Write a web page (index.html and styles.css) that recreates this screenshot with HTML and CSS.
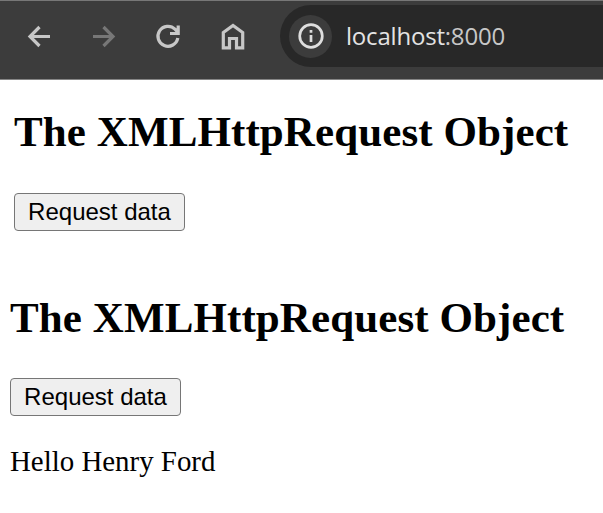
FILE: index.html
```html
<!DOCTYPE html>
<html lang="en">
<head>
<meta charset="utf-8">
<title>The XMLHttpRequest Object</title>
<link rel="stylesheet" href="styles.css">
</head>
<body>
<header class="toolbar">
  <nav class="nav">
    <svg class="icon" viewBox="0 0 28 28"><path d="M25 14.500H5M14.500 5L5 14.500l9.500 9.500"/></svg>
    <svg class="icon icon-disabled" viewBox="0 0 28 28"><path d="M3 14.500h20M13.500 5L23 14.500l-9.500 9.500"/></svg>
    <svg class="icon" viewBox="0 0 28 28"><path d="M23.800 16A10 10 0 1 1 21 7.200L23.500 9.800M24.200 3.500V11.500H16"/></svg>
    <svg class="icon" viewBox="0 0 28 28"><path d="M4.300 25.800V10.500L14 3.500 23.700 10.500v15.300h-6.200V16.500h-7v9.300z"/></svg>
  </nav>
  <div class="address">
    <span class="info">
      <svg viewBox="0 0 28 28"><circle cx="14" cy="14" r="11.300"/><path d="M14 13v7M14 8v2.800"/></svg>
    </span>
    <span class="url"><span class="host">localhost</span>:8000</span>
  </div>
</header>
<main>
  <section class="demo">
    <h2>The XMLHttpRequest Object</h2>
    <button type="button">Request data</button>
  </section>
  <section class="demo demo-result">
    <h2>The XMLHttpRequest Object</h2>
    <button type="button">Request data</button>
    <p>Hello Henry Ford</p>
  </section>
</main>
</body>
</html>
```
FILE: styles.css
```css
* { box-sizing: border-box; }

body {
  margin: 0;
  background: #fff;
  color: #000;
  font-family: "Liberation Serif", serif;
  overflow: hidden;
}

.toolbar {
  display: flex;
  align-items: flex-start;
  height: 80px;
  padding-top: 4px;
  background: #3c3c3c;
  border-top: 1px solid #777;
  border-bottom: 1px solid #858585;
}

.nav {
  display: flex;
  gap: 36.700px;
  width: 280px;
  padding: 17px 0 0 25px;
}

.icon {
  width: 28px;
  height: 28px;
  flex: none;
  fill: none;
  stroke: #c7c7c7;
  stroke-width: 3.200;
}

.icon-disabled { stroke: #777; }

.address {
  display: flex;
  align-items: center;
  flex: 1;
  height: 62px;
  padding-left: 9px;
  background: #282828;
  border-radius: 31px 0 0 31px;
}

.info {
  display: grid;
  place-items: center;
  width: 43px;
  height: 43px;
  border-radius: 50%;
  background: #3c3c3c;
}

.info svg {
  width: 28px;
  height: 28px;
  fill: none;
  stroke: #dedede;
  stroke-width: 2.700;
}

.url {
  margin-left: 14px;
  color: #c7c7c7;
  font: 24px/34px "Open Sans", sans-serif;
  letter-spacing: -0.200px;
}

.host { color: #e3e3e3; }

.demo { padding: 27px 0 0 14px; }

.demo-result { padding: 62px 0 0 10px; }

h2 {
  margin: 0 0 37px;
  font-size: 43px;
  line-height: 49px;
  letter-spacing: 0.100px;
  white-space: nowrap;
}

.demo-result h2 { margin-bottom: 36px; }

button {
  display: block;
  width: 171px;
  height: 38px;
  padding: 0;
  border: 1.500px solid #767676;
  border-radius: 4px;
  background: #efefef;
  color: #000;
  font: 24px/34px "Liberation Sans", sans-serif;
}

p {
  margin: 28px 0 0;
  font-size: 28.900px;
  line-height: 34px;
}
```
